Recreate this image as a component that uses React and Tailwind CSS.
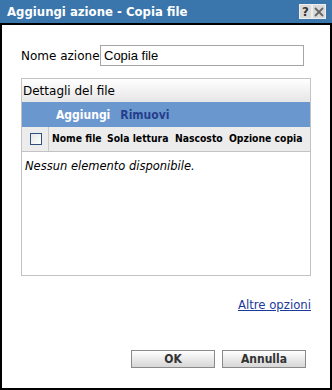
export default function App() {
  const cond = { fontFamily: '"DejaVu Sans Condensed", "DejaVu Sans", sans-serif', fontStretch: 'condensed' };
  return (
    <div className="w-[332px] h-[390px] flex flex-col bg-white" style={{ fontFamily: '"DejaVu Sans", sans-serif' }}>
      <div className="h-[23px] shrink-0 bg-[#3a76ab] flex items-center pl-[7px] pr-[6px]">
        <div className="flex-1 text-white font-bold text-[13px] leading-none" style={cond}>Aggiungi azione - Copia file</div>
        <div className="flex">
          <div className="w-[13px] h-[15px] bg-[#d9d9d9] border border-[#eeeeee] flex items-center justify-center text-[#333] font-bold text-[13px] leading-none" style={cond}>?</div>
          <div className="w-[14px] h-[15px] bg-[#d9d9d9] border border-[#eeeeee] flex items-center justify-center text-[#777]">
            <svg width="10" height="10" viewBox="0 0 10 10"><path d="M1 1L9 9M9 1L1 9" stroke="#666" strokeWidth="1.8" /></svg>
          </div>
        </div>
      </div>
      <div className="flex-1 border-2 border-black flex flex-col">
        <div className="flex items-center mt-[20px] pl-[19px]">
          <span className="text-[12px] text-black w-[79px]">Nome azione</span>
          <div className="w-[204px] h-[21px] border border-[#a5a5a5] flex items-center px-[3px] text-[13px] text-black" style={{ fontFamily: '"Liberation Sans", Arial, sans-serif' }}>Copia file</div>
        </div>
        <div className="ml-[19px] mt-[12px] w-[290px] h-[198px] border border-[#c3c3c3] flex flex-col">
          <div className="h-[23px] bg-gradient-to-b from-white to-[#e6e6e6] flex items-center pl-[1px] text-[12px] text-black">Dettagli del file</div>
          <div className="h-[25px] bg-[#6b97cf] flex items-center pl-[34px] gap-[10px] font-bold text-[12px]" style={cond}>
            <span className="text-white">Aggiungi</span>
            <span className="text-[#253f8c]">Rimuovi</span>
          </div>
          <div className="h-[25px] bg-[#ececec] border-b border-[#c3c3c3] flex items-stretch">
            <div className="w-[27px] shrink-0 border-r border-[#c9c9c9] flex items-center justify-center pl-[1px]">
              <div className="w-[12px] h-[12px] border border-[#2f4f7f] bg-gradient-to-br from-[#e6e6e6] to-white" />
            </div>
            <div className="flex items-center pl-[3px] font-bold text-[10.3px] text-black whitespace-nowrap" style={cond}>
              <span className="w-[55px]">Nome file</span>
              <span className="w-[68px]">Sola lettura</span>
              <span className="w-[54px]">Nascosto</span>
              <span>Opzione copia</span>
            </div>
          </div>
          <div className="pl-[3px] pt-[6px] italic text-[11.5px] text-black">Nessun elemento disponibile.</div>
        </div>
        <div className="flex justify-end pr-[19px] mt-[22px]">
          <a className="text-[13px] text-[#1b3a9c] underline leading-[14px]" style={cond}>Altre opzioni</a>
        </div>
        <div className="flex justify-end gap-[7px] pr-[24px] mt-[38px]">
          <button className="w-[84px] h-[18px] border border-[#8a8a8a] bg-gradient-to-b from-white to-[#d6d6d6] font-bold text-[12px] text-[#333] leading-none" style={cond}>OK</button>
          <button className="w-[84px] h-[18px] border border-[#8a8a8a] bg-gradient-to-b from-white to-[#d6d6d6] font-bold text-[12px] text-[#333] leading-none" style={cond}>Annulla</button>
        </div>
      </div>
    </div>
  );
}
